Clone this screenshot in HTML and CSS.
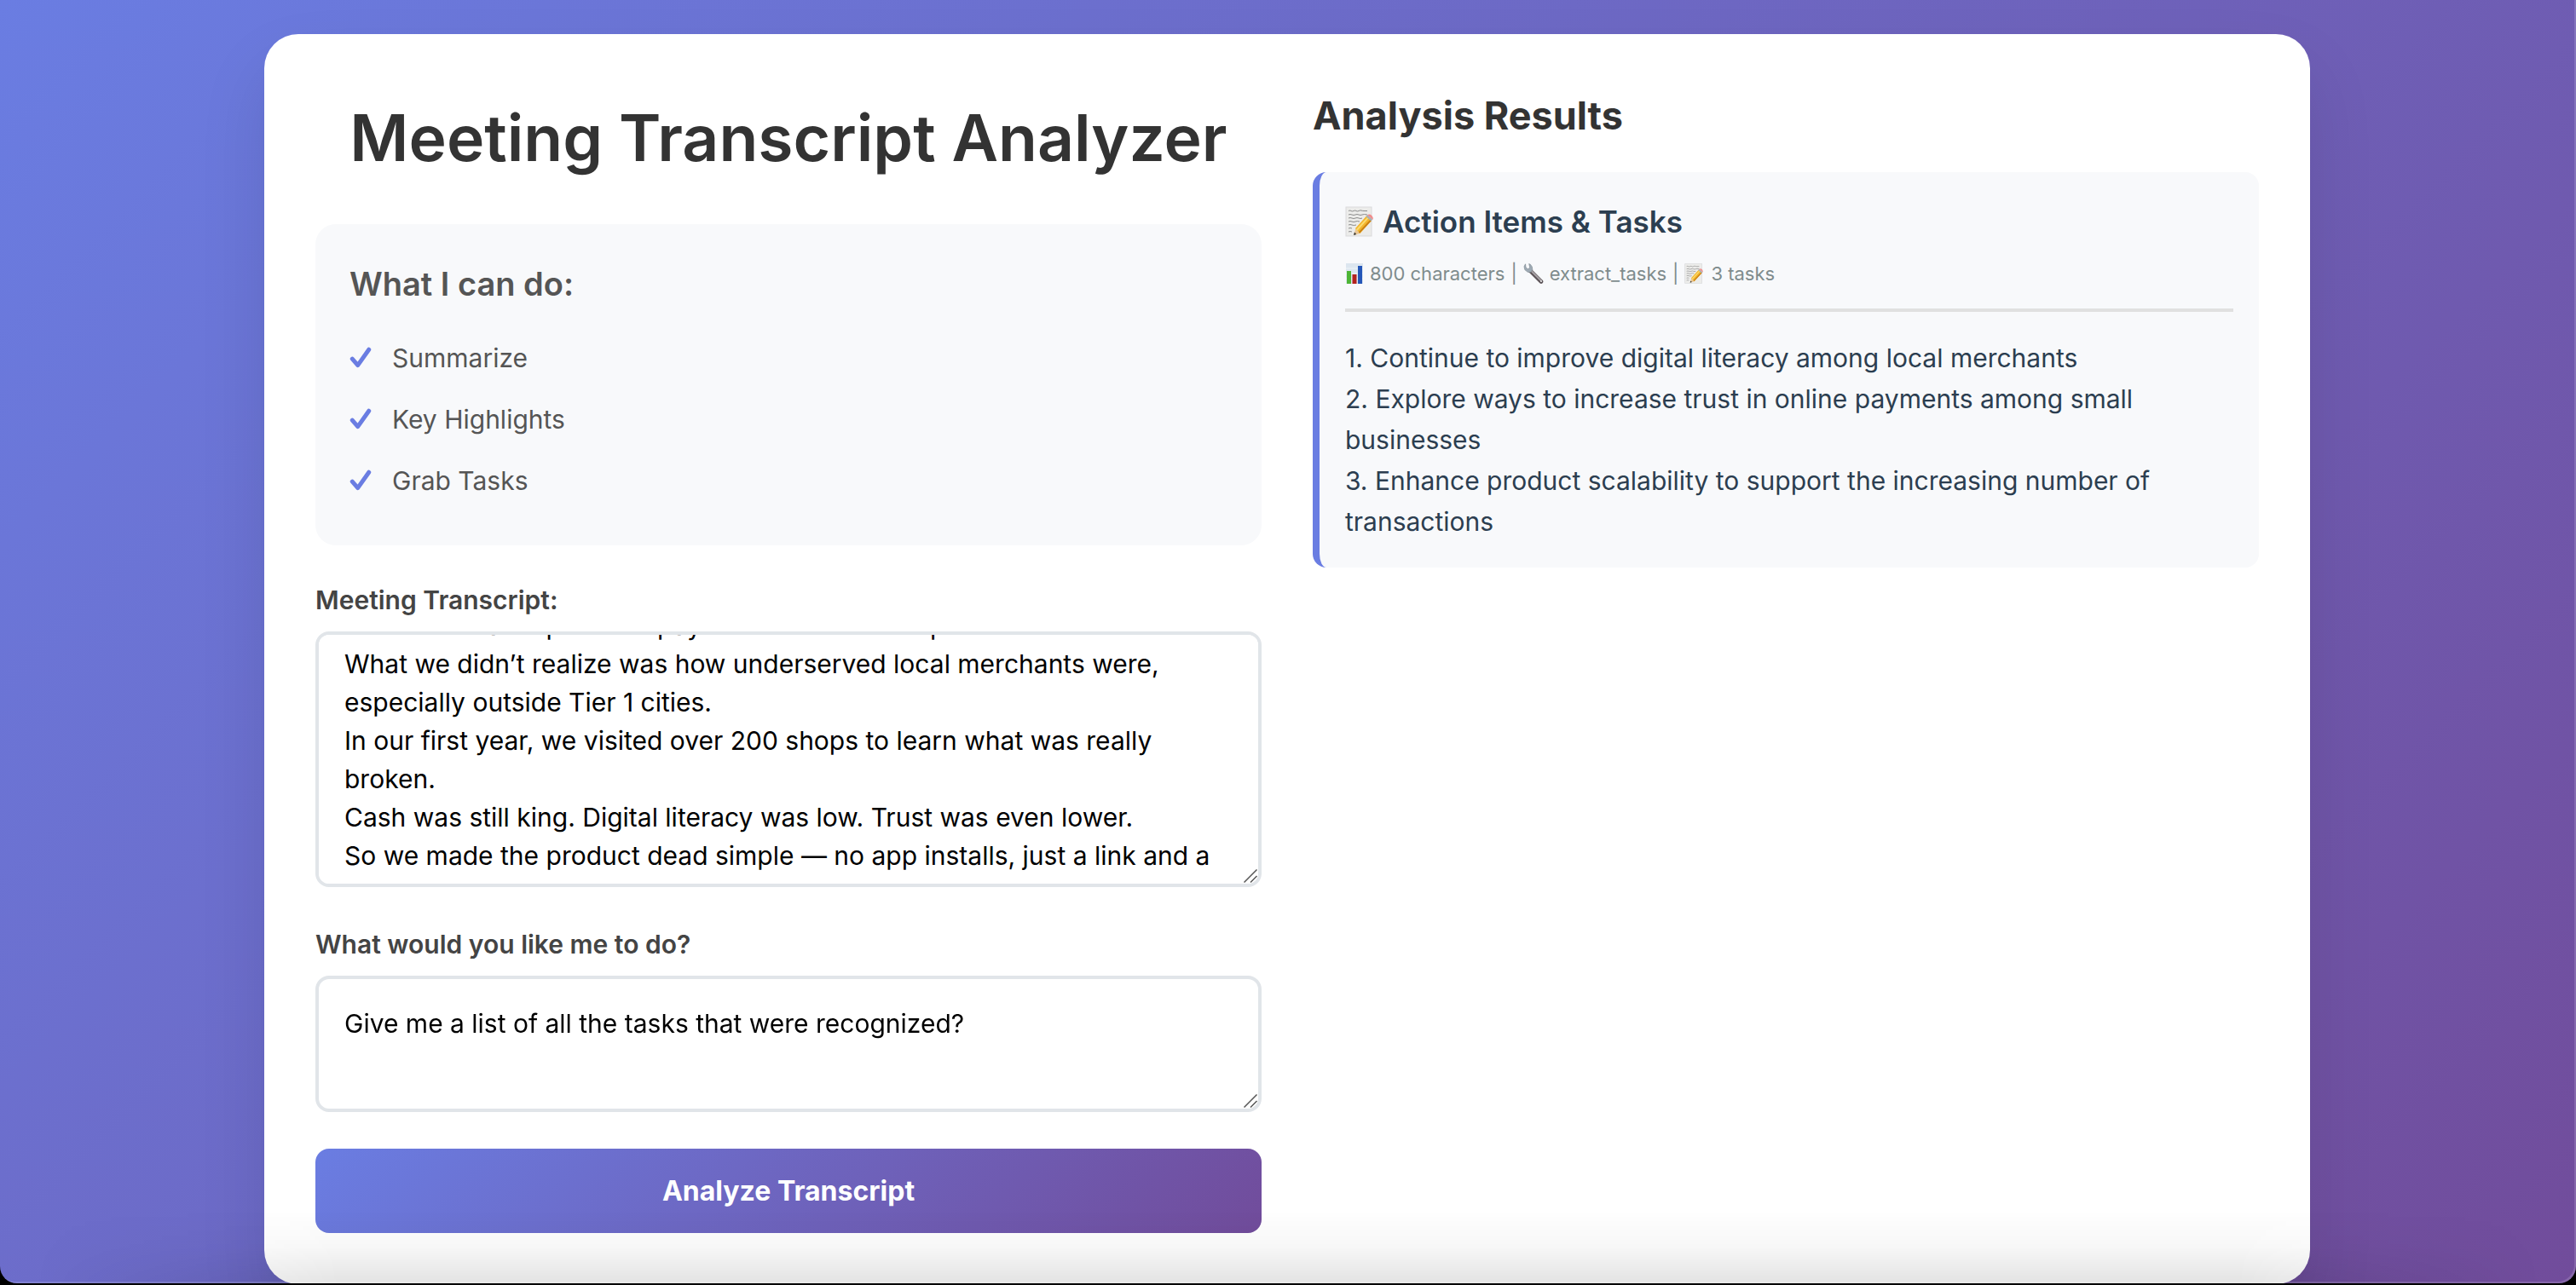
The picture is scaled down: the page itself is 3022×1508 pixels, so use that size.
FILE: index.html
```html
<!DOCTYPE html>
<html lang="en">
<head>
<meta charset="utf-8">
<title>Meeting Transcript Analyzer</title>
<link rel="stylesheet" href="styles.css">
</head>
<body>
<svg class="defs" aria-hidden="true">
  <symbol id="check" viewBox="0 0 24 24"><path d="M3 13 L9 20 L21 3" fill="none" stroke="#6a7de2" stroke-width="4.6" stroke-linecap="round" stroke-linejoin="round"/></symbol>
  <symbol id="grip" viewBox="0 0 16 16"><path d="M.5 15.500 L15.500 .5 M8 15.500 L15.500 8" fill="none" stroke="#555" stroke-width="1.500"/></symbol>
  <symbol id="memo" viewBox="0 0 36 36">
    <rect x="1" y="1" width="30" height="34" fill="#ececea" stroke="#d9dadb" stroke-width="1"/>
    <path d="M4 5.5q2-1 3 0t3 0 3 0 3 0 3-.5 3 .5 4 0M4 10q2-1 4 0t4 0 4 0 4 0 6 0M4 14q2-1 4 0t4 0 4 0 4 0M4 18q2-1 4 0t4 0 5 0M4 22q2-1 4 0t5 0M4 26q2-1 4 0M4 30q2-1 4 0" fill="none" stroke="#8b8b8b" stroke-width="1"/>
    <path d="M10 34 L12.500 25.500 L17.500 32z" fill="#e9c796"/><path d="M10 34l1-3.400 2.200 2.300z" fill="#333"/>
    <path d="M12 26 L25 11.500 L31 17 L17.500 32z" fill="#f3b52c"/><path d="M13.700 28 L27 13.300" stroke="#fbdc70" stroke-width="2"/><path d="M16.500 31 L30.200 16.300" stroke="#c77d13" stroke-width="1.800"/>
    <path d="M24.500 12l1.700-1.900 6 5.500-1.800 1.900z" fill="#a9b0b4"/><path d="M26 10.300q2.500-2 5 .4t1.600 5z" fill="#f08c8c"/>
  </symbol>
  <symbol id="chart" viewBox="0 0 20 24">
    <rect width="20" height="24" fill="#dce6ef"/><path d="M0 6h20M0 12h20M0 18h20" stroke="#eef4f8" stroke-width="1"/>
    <rect x="1" y="9" width="5" height="15" fill="#4db535"/><rect x="7.500" y="13" width="5" height="11" fill="#b3221e"/><rect x="14" y="3" width="5" height="21" fill="#2456b8"/>
  </symbol>
  <symbol id="wrench" viewBox="0 0 24 24">
    <path d="M8 8.500 L21 21.500" stroke="#5c5458" stroke-width="4.600" stroke-linecap="round"/><path d="M8.500 8 L21 20.500" stroke="#a7a2a6" stroke-width="2"/>
    <path d="M2.500.8 1 3.800 1.800 7.600 5.200 10.300 8.500 10.600 10.800 7.800 10.400 4.200 8.500 1.400 6.700.6 7.800 5 5.400 6.800 3 4.700z" fill="#9eaab4" stroke="#77838c" stroke-width=".6"/>
    <circle cx="21" cy="21" r="1" fill="#f4f4f4"/>
  </symbol>
</svg>

<main class="container">
  <section class="panel">
    <h1 class="title">Meeting Transcript Analyzer</h1>
    <div class="features">
      <h3 class="features-title">What I can do:</h3>
      <ul class="feature-list">
        <li class="feature"><svg class="check"><use href="#check"/></svg>Summarize</li>
        <li class="feature"><svg class="check"><use href="#check"/></svg>Key Highlights</li>
        <li class="feature"><svg class="check"><use href="#check"/></svg>Grab Tasks</li>
      </ul>
    </div>
    <form class="form">
      <div class="field">
        <label class="label" for="transcript">Meeting Transcript:</label>
        <textarea class="input input-transcript" id="transcript">We started the company to help small
businesses accept online payments with no setup fees.
What we didn’t realize was how underserved local merchants were, especially outside Tier 1 cities.
In our first year, we visited over 200 shops to learn what was really broken.
Cash was still king. Digital literacy was low. Trust was even lower.
So we made the product dead simple — no app installs, just a link and a QR code.</textarea>
        <svg class="grip"><use href="#grip"/></svg>
      </div>
      <div class="field">
        <label class="label" for="request">What would you like me to do?</label>
        <textarea class="input input-request" id="request">Give me a list of all the tasks that were recognized?</textarea>
        <svg class="grip"><use href="#grip"/></svg>
      </div>
      <button class="submit" type="button">Analyze Transcript</button>
    </form>
  </section>

  <section class="panel">
    <h2 class="results-title">Analysis Results</h2>
    <article class="result">
      <header class="result-header">
        <h4 class="result-title"><svg class="icon-title"><use href="#memo"/></svg>Action Items &amp; Tasks</h4>
        <p class="meta">
          <svg class="icon-chart"><use href="#chart"/></svg><span>800 characters</span><span>|</span><svg class="icon-meta"><use href="#wrench"/></svg><span>extract_tasks</span><span>|</span><svg class="icon-meta"><use href="#memo"/></svg><span>3 tasks</span>
        </p>
      </header>
      <div class="result-body">1. Continue to improve digital literacy among local merchants
2. Explore ways to increase trust in online payments among small businesses
3. Enhance product scalability to support the increasing number of transactions</div>
    </article>
  </section>
</main>
<div class="window-shade"></div>
<div class="window-edge"></div>
<script src="app.js"></script>
</body>
</html>
```
FILE: styles.css
```css
* { box-sizing: border-box; margin: 0; padding: 0; }

body {
  min-height: 100vh;
  padding: 40px 42px 0 40px;
  background: linear-gradient(135deg, #6a7de2 0%, #714c9b 100%);
  font-family: Inter, "Liberation Sans", sans-serif;
  font-size: 30px;
  color: #333;
}

.defs { position: absolute; width: 0; height: 0; }

.container {
  display: grid;
  grid-template-columns: 1fr 1fr;
  gap: 60px;
  max-width: 2400px;
  margin: 0 auto;
  padding: 60px;
  background: #fff;
  border-radius: 40px;
  box-shadow: 0 40px 80px rgba(0, 0, 0, 0.1);
}

.panel { min-width: 0; }

.title {
  margin-bottom: 40px;
  font-size: 75px;
  line-height: 123px;
  font-weight: 600;
  text-align: center;
}

.features {
  margin-bottom: 40px;
  padding: 40px;
  background: #f8f9fb;
  border-radius: 24px;
}

.features-title {
  margin-bottom: 20px;
  font-size: 38px;
  line-height: 61px;
  font-weight: 600;
  color: #555;
}

.feature-list { list-style: none; }

.feature {
  display: flex;
  align-items: center;
  gap: 24px;
  height: 72px;
  color: #555;
}

.check { width: 26px; height: 26px; }

.field {
  position: relative;
  margin-bottom: 43px;
}

.label {
  display: block;
  margin-bottom: 13px;
  line-height: 48px;
  font-weight: 600;
  color: #444;
}

.input {
  display: block;
  width: 100%;
  padding: 30px;
  border: 4px solid #e1e5e9;
  border-radius: 16px;
  background: #fff;
  font: inherit;
  line-height: 45px;
  color: #000;
  resize: vertical;
  scrollbar-width: none;
}

.input::-webkit-resizer { display: none; }

.input-transcript { height: 300px; }
.input-request { height: 160px; }

.grip {
  position: absolute;
  right: 5px;
  bottom: 5px;
  width: 16px;
  height: 16px;
  pointer-events: none;
}

.submit {
  display: block;
  width: 100%;
  padding: 30px;
  border: 0;
  border-radius: 16px;
  background: linear-gradient(135deg, #6a7de2 0%, #714c9b 100%);
  font: inherit;
  font-size: 32px;
  line-height: 39px;
  font-weight: 700;
  color: #fff;
}

.results-title {
  margin-bottom: 30px;
  font-size: 45px;
  line-height: 72px;
  font-weight: 700;
}

.result {
  padding: 30px;
  background: #f8f9fb;
  border-left: 8px solid #6a7de2;
  border-radius: 16px;
}

.result-header {
  margin-bottom: 30px;
  padding-bottom: 21px;
  border-bottom: 4px solid #e0e0e0;
}

.result-title {
  display: flex;
  align-items: center;
  gap: 8px;
  margin-bottom: 13px;
  font-size: 35px;
  line-height: 56px;
  font-weight: 600;
  color: #2c3e50;
}

.icon-title { width: 36px; height: 36px; }

.meta {
  display: flex;
  align-items: center;
  gap: 7px;
  font-size: 22px;
  line-height: 40px;
  color: #7f8c8d;
}

.icon-meta { width: 24px; height: 24px; }
.icon-chart { width: 22px; height: 24px; }

.result-body {
  line-height: 48px;
  white-space: pre-wrap;
  color: #2c3e50;
}

/* Darkening along the bottom edge of the window */
.window-shade {
  position: fixed;
  inset: auto 0 2px;
  height: 86px;
  background: linear-gradient(to bottom, rgba(0, 0, 0, 0), rgba(0, 0, 0, 0.03) 50%, rgba(0, 0, 0, 0.11));
  mask-image: linear-gradient(to right, transparent 40px, #000 400px, #000 calc(100% - 400px), transparent calc(100% - 40px));
  pointer-events: none;
}

/* Rounded lower corners of the window */
.window-edge {
  position: fixed;
  inset: 0 0 2px;
  border-radius: 0 0 20px 20px;
  box-shadow: 0 0 0 20px #000, inset -2px -2px 0 rgba(255, 255, 255, 0.15);
  pointer-events: none;
}
```
FILE: app.js
```js
const transcript = document.getElementById("transcript");
transcript.scrollTop = 108;
```
